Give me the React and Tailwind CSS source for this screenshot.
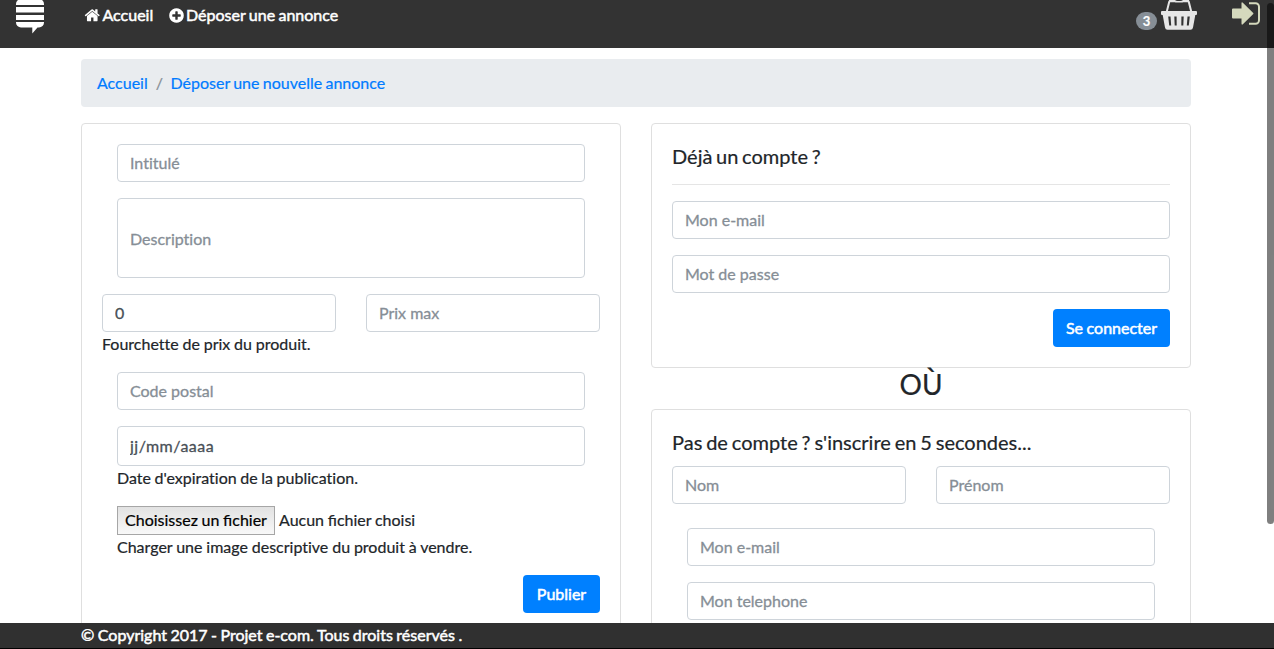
const field =
  "block w-full rounded border border-[#ced4da] bg-white px-3 text-base leading-6 text-[#495057] placeholder:text-[#868e96] placeholder:opacity-100 outline-none [-webkit-text-stroke:0.3px]";

function Field({ className = "h-[38px] pb-[2px]", ...props }) {
  return <input className={`${field} ${className}`} {...props} />;
}

function Button({ children, className = "" }) {
  return (
    <button className={`h-[38px] rounded bg-[#0080ff] text-base leading-6 text-white [-webkit-text-stroke:0.5px] ${className}`}>
      {children}
    </button>
  );
}

function Glyph({ d, className }) {
  return (
    <svg viewBox="0 0 1792 1792" className={`shrink-0 ${className}`} fill="currentColor">
      <path d={d} />
    </svg>
  );
}

const HOME =
  "M1472 992v480q0 26-19 45t-45 19h-384v-384h-256v384h-384q-26 0-45-19t-19-45v-480q0-1 .5-3t.5-3l575-474 575 474q1 2 1 6zm223-69l-62 74q-8 9-21 11h-3q-13 0-21-7l-692-577-692 577q-12 8-24 7-13-2-21-11l-62-74q-8-10-7-23.5t11-21.5l719-599q32-26 76-26t76 26l244 204v-195q0-14 9-23t23-9h192q14 0 23 9t9 23v408l219 182q10 8 11 21.5t-7 23.5z";
const PLUS =
  "M1344 960v-128q0-26-19-45t-45-19h-256v-256q0-26-19-45t-45-19h-128q-26 0-45 19t-19 45v256h-256q-26 0-45 19t-19 45v128q0 26 19 45t45 19h256v256q0 26 19 45t45 19h128q26 0 45-19t19-45v-256h256q26 0 45-19t19-45zm320-64q0 209-103 385.5t-279.5 279.5-385.5 103-385.5-103-279.5-279.5-103-385.5 103-385.5 279.5-279.5 385.5-103 385.5 103 279.5 279.5 103 385.5z";

function Header() {
  return (
    <header className="flex h-12 shrink-0 items-start bg-[#333] text-white">
      <svg viewBox="0 0 28 34" className="ml-4 h-[34px] w-7 shrink-0" fill="#fff">
        <path d="M0 5V4a5 5 0 0 1 5-5h18a5 5 0 0 1 5 5v1zM0 7h28v5.500H0zM0 15h28v5H0zM0 22h28v.5a5 5 0 0 1-5 5h-1.500L16.300 33.500v-6H5a5 5 0 0 1-5-5z" />
      </svg>
      <nav className="ml-[40px] flex items-start pt-[3px] text-base leading-6 whitespace-nowrap [-webkit-text-stroke:0.5px] [word-spacing:-0.7px]">
        <a className="flex w-[84px] items-center">
          <Glyph d={HOME} className="mr-[2px] h-[16.5px] w-[16.5px]" />
          Accueil
        </a>
        <a className="flex items-center">
          <Glyph d={PLUS} className="mr-[1px] h-[17px] w-[17px]" />
          Déposer une annonce
        </a>
      </nav>
      <div className="ml-auto flex items-start pr-[14px]">
        <span className="mt-[12px] flex h-[18px] w-[21px] items-center justify-center rounded-full bg-[#868e96] text-[13px] font-bold">3</span>
        <svg viewBox="0 0 36 31" className="ml-1 h-[31px] w-9" fill="none">
          <path d="M5.800 11.500L8.300 1.500M30.200 11.500L27.700 1.500" stroke="#e6e6e6" strokeWidth="2" />
          <path d="M8 0h6q1 1 2.500 1h3Q21 1 22 0h6l.5 2.200h-6.300q-.7.300-1.700.3h-5q-1 0-1.700-.3H7.500z" fill="#e6e6e6" />
          <path fillRule="evenodd" fill="#e6e6e6" d="M1 11h34q1 0 1 1v2q0 1-1 1h-.7L32 27.500q-.4 2.300-2.500 2.300h-23q-2.100 0-2.500-2.300L1.700 15H1q-1 0-1-1v-2q0-1 1-1zM7.200 16.500l1 9h2l-.7-9zM13.300 16.500l.4 9h2l-.1-9zM20.400 16.500l-.1 9h2l.4-9zM26.500 16.500l-.7 9h2l1-9z" />
        </svg>
        <svg viewBox="0 0 28 24" className="mt-[2px] ml-[35px] h-6 w-7" fill="none">
          <path d="M1 6.500h8.500V1.500q0-2 1.600-.5L21 10.700q.9.800 0 1.600L11.100 22q-1.600 1.500-1.600-.5v-5H1q-1 0-1-1v-8q0-1 1-1z" fill="#d5d9bd" />
          <path d="M17 1.200h6.500a3.500 3.500 0 0 1 3.500 3.500v13.600a3.500 3.500 0 0 1-3.500 3.500H17" stroke="#d5d9bd" strokeWidth="2" />
        </svg>
      </div>
    </header>
  );
}

function ListingForm() {
  return (
    <section className="w-[540px] rounded border border-[#dfdfdf] px-5 pt-5">
      <div className="flex flex-col gap-4 px-[15px]">
        <Field placeholder="Intitulé" />
        <Field placeholder="Description" className="h-20" />
      </div>
      <div className="mt-4 grid grid-cols-2 gap-[30px]">
        <Field defaultValue="0" />
        <Field placeholder="Prix max" />
      </div>
      <p className="[word-spacing:-0.3px]">Fourchette de prix du produit.</p>
      <div className="mt-4 px-[15px]">
        <Field placeholder="Code postal" />
        <Field defaultValue="jj/mm/aaaa" className="mt-4 h-10 pb-[2px] tracking-[0.5px]" />
        <p className="[word-spacing:-0.5px]">Date d'expiration de la publication.</p>
        <div className="mt-4 flex items-center gap-1 [font-variant-ligatures:normal]">
          <button className="h-[29px] w-[158px] border border-[#a6a6a6] bg-linear-to-b from-[#e2e2e2] to-[#f8f8f8] pb-[2px] text-base leading-6 whitespace-nowrap text-black [word-spacing:-0.4px]">
            Choisissez un fichier
          </button>
          <span className="pb-[2px] [word-spacing:-0.4px]">Aucun fichier choisi</span>
        </div>
        <p className="-mt-px pt-px [word-spacing:-0.25px]">Charger une image descriptive du produit à vendre.</p>
      </div>
      <div className="mt-4 flex justify-end">
        <Button className="w-[77px]">Publier</Button>
      </div>
    </section>
  );
}

function LoginCard() {
  return (
    <section className="h-[245px] rounded border border-[#dfdfdf] px-5 pt-[19px]">
      <h2 className="text-xl leading-[26px] [word-spacing:-1.4px]">Déjà un compte ?</h2>
      <hr className="mt-[15px] mb-4 border-[#e5e5e5]" />
      <div className="flex flex-col gap-4">
        <Field placeholder="Mon e-mail" />
        <Field placeholder="Mot de passe" />
        <Button className="w-[117px] self-end [word-spacing:-0.5px]">Se connecter</Button>
      </div>
    </section>
  );
}

function RegisterCard() {
  return (
    <section className="rounded border border-[#dfdfdf] px-5 pt-[19px] pb-10">
      <h2 className="text-xl leading-[26px] [word-spacing:-1.25px]">Pas de compte ? s'inscrire en 5 secondes...</h2>
      <div className="mt-[11px] grid grid-cols-2 gap-[30px]">
        <Field placeholder="Nom" />
        <Field placeholder="Prénom" />
      </div>
      <div className="mt-6 flex flex-col gap-4 px-[15px]">
        <Field placeholder="Mon e-mail" />
        <Field placeholder="Mon telephone" />
      </div>
    </section>
  );
}

export default function App() {
  return (
    <div className="relative flex h-[649px] w-[1274px] flex-col overflow-hidden bg-white font-['Lato',sans-serif] text-base leading-6 text-[#212529] [-webkit-text-stroke:0.2px] [font-variant-ligatures:no-common-ligatures]">
      <Header />
      <main className="min-h-0 flex-1 overflow-hidden pt-[11px] pr-[83px] pl-[81px]">
        <nav className="flex h-12 items-center rounded bg-[#e9ecef] px-4 text-[#007bff] [word-spacing:-0.8px]">
          <a>Accueil</a>
          <span className="pr-[7.5px] pl-2 text-[#868e96]">/</span>
          <a>Déposer une nouvelle annonce</a>
        </nav>
        <div className="mt-4 flex gap-[30px]">
          <ListingForm />
          <div className="w-[540px]">
            <LoginCard />
            <div className="flex h-[41px] items-start justify-center text-[28px] leading-[32px]">OÙ</div>
            <RegisterCard />
          </div>
        </div>
      </main>
      <footer className="h-[26px] shrink-0 border-b border-black bg-[#303030] pl-[81px] leading-6 text-white [-webkit-text-stroke:0.5px] [word-spacing:-0.6px]">
        © Copyright 2017 - Projet e-com. Tous droits réservés .
      </footer>
      <div className="absolute top-[3px] right-0 h-[521px] w-[7px] rounded-full bg-black/50" />
    </div>
  );
}
